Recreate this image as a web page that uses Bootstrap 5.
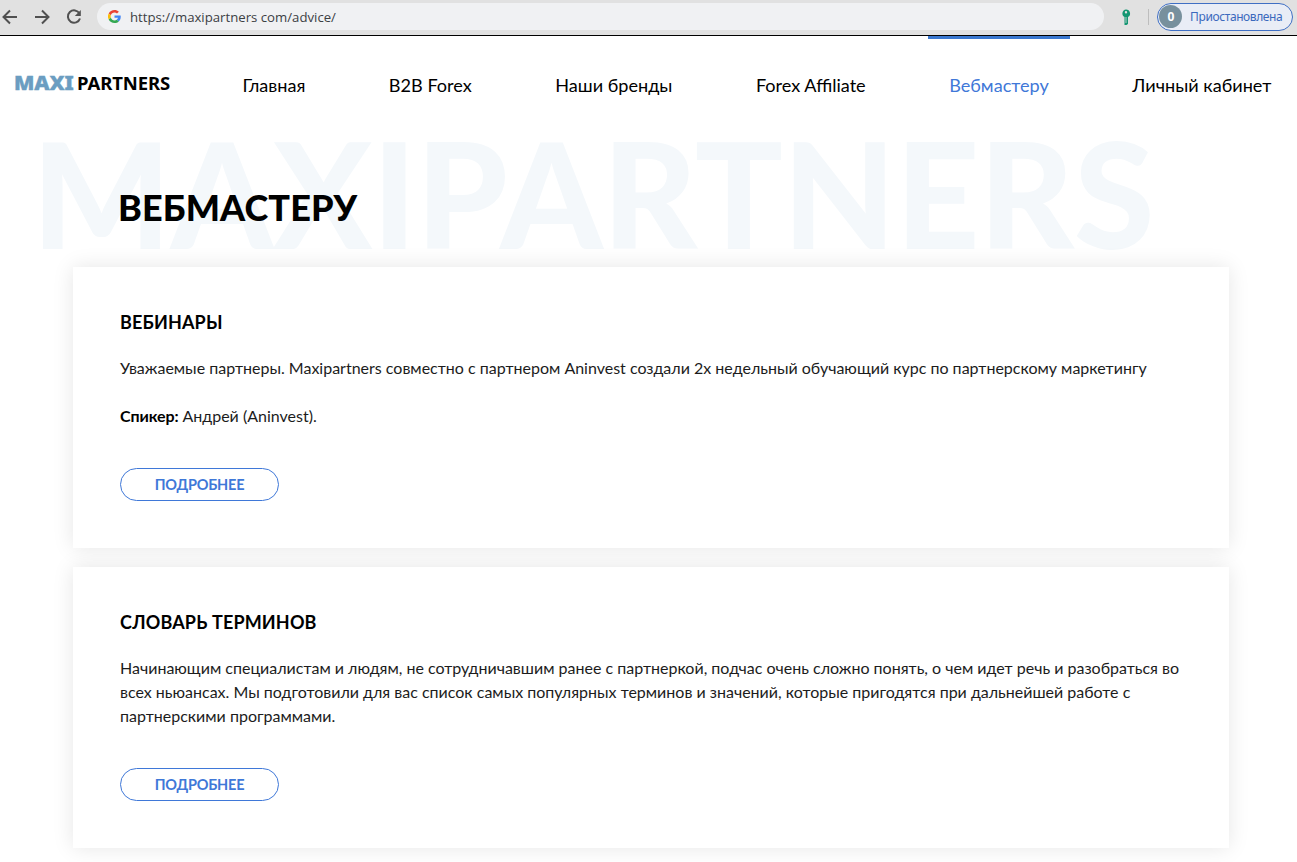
<!DOCTYPE html>
<html lang="ru">
<head>
  <meta charset="UTF-8" />
  <meta name="viewport" content="width=device-width, initial-scale=1.0"/>
  <title>Вебмастеру</title>
  <link href="https://cdn.jsdelivr.net/npm/bootstrap@5.3.0/dist/css/bootstrap.min.css" rel="stylesheet"/>
  <style>
    body { font-family: Lato, "Open Sans", sans-serif; color: #000; background: #fff; height: 862px; overflow: hidden; }

    /* browser bar */
    .browser-bar { height: 36px; background: #e1e1e1; border-bottom: 1px solid #000; padding: 0 4px 2px 1px; font-family: "Noto Sans", sans-serif; }
    .bar-icon { width: 18px; height: 18px; margin-right: 14px; }
    .address { height: 27px; width: 1008px; background: #f0f1f3; border-radius: 14px; padding-left: 11px; font: 13.200px/27px "Open Sans", sans-serif; color: #3c4043; }
    .address svg { width: 13px; height: 13px; margin-right: 9px; }
    .address span { padding-top: 1px; }
    .key-icon { width: 10px; height: 16px; margin-left: 17px; }
    .bar-line { width: 1px; height: 16px; background: #bdbdbd; margin: 0 8px 0 17px; }
    .profile { height: 28px; width: 136px; border: 1px solid #3f6fc4; border-radius: 14px; background: #e9edf6; color: #3b69bd; font-size: 12px; letter-spacing: -.4px; padding-left: 1px; }
    .avatar { width: 23px; height: 23px; background: #77909d; color: #fff; font-size: 12px; margin-right: 8px; }

    /* site header */
    .site-header { height: 98px; padding: 0 4px 0 14px; }
    .logo { font: 700 18.500px/1 "Noto Sans", sans-serif; width: 207px; padding-top: 38px; white-space: nowrap; letter-spacing: -.1px; }
    .logo-maxi { color: #6b9dc1; font-weight: 900; width: 63px; transform: scaleX(1.14); transform-origin: 0 0; -webkit-text-stroke: .3px #6b9dc1; }
    .main-menu .nav-link { color: #000; font-size: 18.100px; line-height: 27px; padding: 33px 21.500px 0; border-top: 3px solid transparent; white-space: nowrap; }
    .main-menu .nav-link.active { color: #3f78d8; border-top-color: #3a78d0; }

    .page-title { position: relative; height: 133px; padding: 50px 0 0 118px; }
    .watermark { position: absolute; left: 32px; top: -14px; z-index: -1; font-size: 146px; line-height: 146px; font-weight: 900; letter-spacing: -.15px; color: #f4f8fb; white-space: nowrap; }
    .page-title h1 { font-size: 36px; line-height: 46px; font-weight: 900; letter-spacing: .1px; }

    .advice-list { padding-left: 73px; width: 1229px; gap: 19px; }
    .advice { background: #fff; height: 281px; padding: 43px 47px 0; box-shadow: 0 0 20px rgba(0, 0, 0, .1); }
    .advice h2 { font-size: 18px; line-height: 24px; font-weight: 700; letter-spacing: .15px; margin-bottom: 22px; }
    .advice p { font-size: 16px; line-height: 24px; margin-bottom: 24px; color: #1c1c1c; }
    .advice b { color: #000; letter-spacing: -.1px; }
    .more { width: 159px; height: 33px; border: 1px solid #3f78d8; border-radius: 17px; color: #3f78d8; font-size: 14.500px; line-height: 31px; font-weight: 700; letter-spacing: -.2px; padding: 0; margin-top: 16px; }
  </style>
</head>
<body>
  <div class="browser-bar d-flex align-items-center">
    <svg class="bar-icon" viewBox="0 0 18 18" fill="none" stroke="#505050" stroke-width="2"><path d="M16 9H3M9 2.5L2.5 9L9 15.5"/></svg>
    <svg class="bar-icon" viewBox="0 0 18 18" fill="none" stroke="#505050" stroke-width="2"><path d="M2 9H15M9 2.5L15.500 9L9 15.500"/></svg>
    <svg class="bar-icon" viewBox="0 0 18 18" fill="none" stroke="#505050" stroke-width="2"><path d="M14.500 5.500A6.200 6.200 0 1 0 15 10.500"/><path d="M15.800 2V8H9.800Z" fill="#505050" stroke="none"/></svg>
    <div class="address d-flex align-items-center">
      <svg viewBox="0 0 48 48"><path fill="#ea4335" d="M24 9.500c3.500 0 6.700 1.200 9.200 3.600l6.900-6.900C35.900 2.400 30.500 0 24 0 14.600 0 6.500 5.400 2.600 13.200l8 6.200C12.400 13.700 17.700 9.500 24 9.500z"/><path fill="#4285f4" d="M47 24.600c0-1.600-.2-3.100-.4-4.600H24v9h12.900c-.6 3-2.300 5.500-4.800 7.200l7.700 6C44.400 38 47 31.800 47 24.600z"/><path fill="#fbbc05" d="M10.500 28.600a14.500 14.500 0 0 1 0-9.200l-8-6.200a24 24 0 0 0 0 21.600z"/><path fill="#34a853" d="M24 48c6.500 0 11.900-2.100 15.900-5.800l-7.700-6c-2.200 1.400-4.900 2.300-8.200 2.300-6.300 0-11.600-4.200-13.500-9.900l-8 6.200C6.500 42.600 14.600 48 24 48z"/></svg>
      <span>https://maxipartners com/advice/</span>
    </div>
    <svg class="key-icon" viewBox="0 0 10 16"><path fill="#149672" fill-rule="evenodd" d="M5 0.500a4 4 0 0 1 2 7.500v7l-1.500 1H3.500V8A4 4 0 0 1 5 .5zM5 2a1.200 1.200 0 1 0 0 2.400A1.200 1.200 0 0 0 5 2z"/><path stroke="#e1e1e1" stroke-width=".8" d="M5 8v6"/></svg>
    <div class="bar-line"></div>
    <div class="profile d-flex align-items-center">
      <span class="avatar rounded-circle d-flex align-items-center justify-content-center fw-bold">0</span>
      <span>Приостановлена</span>
    </div>
  </div>

  <header class="site-header d-flex">
    <div class="logo d-flex"><span class="logo-maxi">MAXI</span><span>PARTNERS</span></div>
    <nav class="main-menu nav flex-nowrap flex-grow-1 justify-content-between align-items-start">
      <a class="nav-link" href="#">Главная</a>
      <a class="nav-link" href="#">B2B Forex</a>
      <a class="nav-link" href="#">Наши бренды</a>
      <a class="nav-link" href="#">Forex Affiliate</a>
      <a class="nav-link active" href="#">Вебмастеру</a>
      <a class="nav-link" href="#">Личный кабинет</a>
    </nav>
  </header>

  <main>
    <div class="page-title">
      <div class="watermark">MAXIPARTNERS</div>
      <h1 class="mb-0">ВЕБМАСТЕРУ</h1>
    </div>

    <div class="advice-list d-flex flex-column">
      <section class="advice">
        <h2>ВЕБИНАРЫ</h2>
        <p>Уважаемые партнеры. Maxipartners совместно с партнером Aninvest создали 2х недельный обучающий курс по партнерскому маркетингу</p>
        <p><b>Спикер:</b> Андрей (Aninvest).</p>
        <a class="more btn" href="#">ПОДРОБНЕЕ</a>
      </section>
      <section class="advice">
        <h2>СЛОВАРЬ ТЕРМИНОВ</h2>
        <p>Начинающим специалистам и людям, не сотрудничавшим ранее с партнеркой, подчас очень сложно понять, о чем идет речь и разобраться во всех ньюансах. Мы подготовили для вас список самых популярных терминов и значений, которые пригодятся при дальнейшей работе с партнерскими программами.</p>
        <a class="more btn" href="#">ПОДРОБНЕЕ</a>
      </section>
    </div>
  </main>

  <script src="https://cdn.jsdelivr.net/npm/bootstrap@5.3.0/dist/js/bootstrap.bundle.min.js"></script>
</body>
</html>
